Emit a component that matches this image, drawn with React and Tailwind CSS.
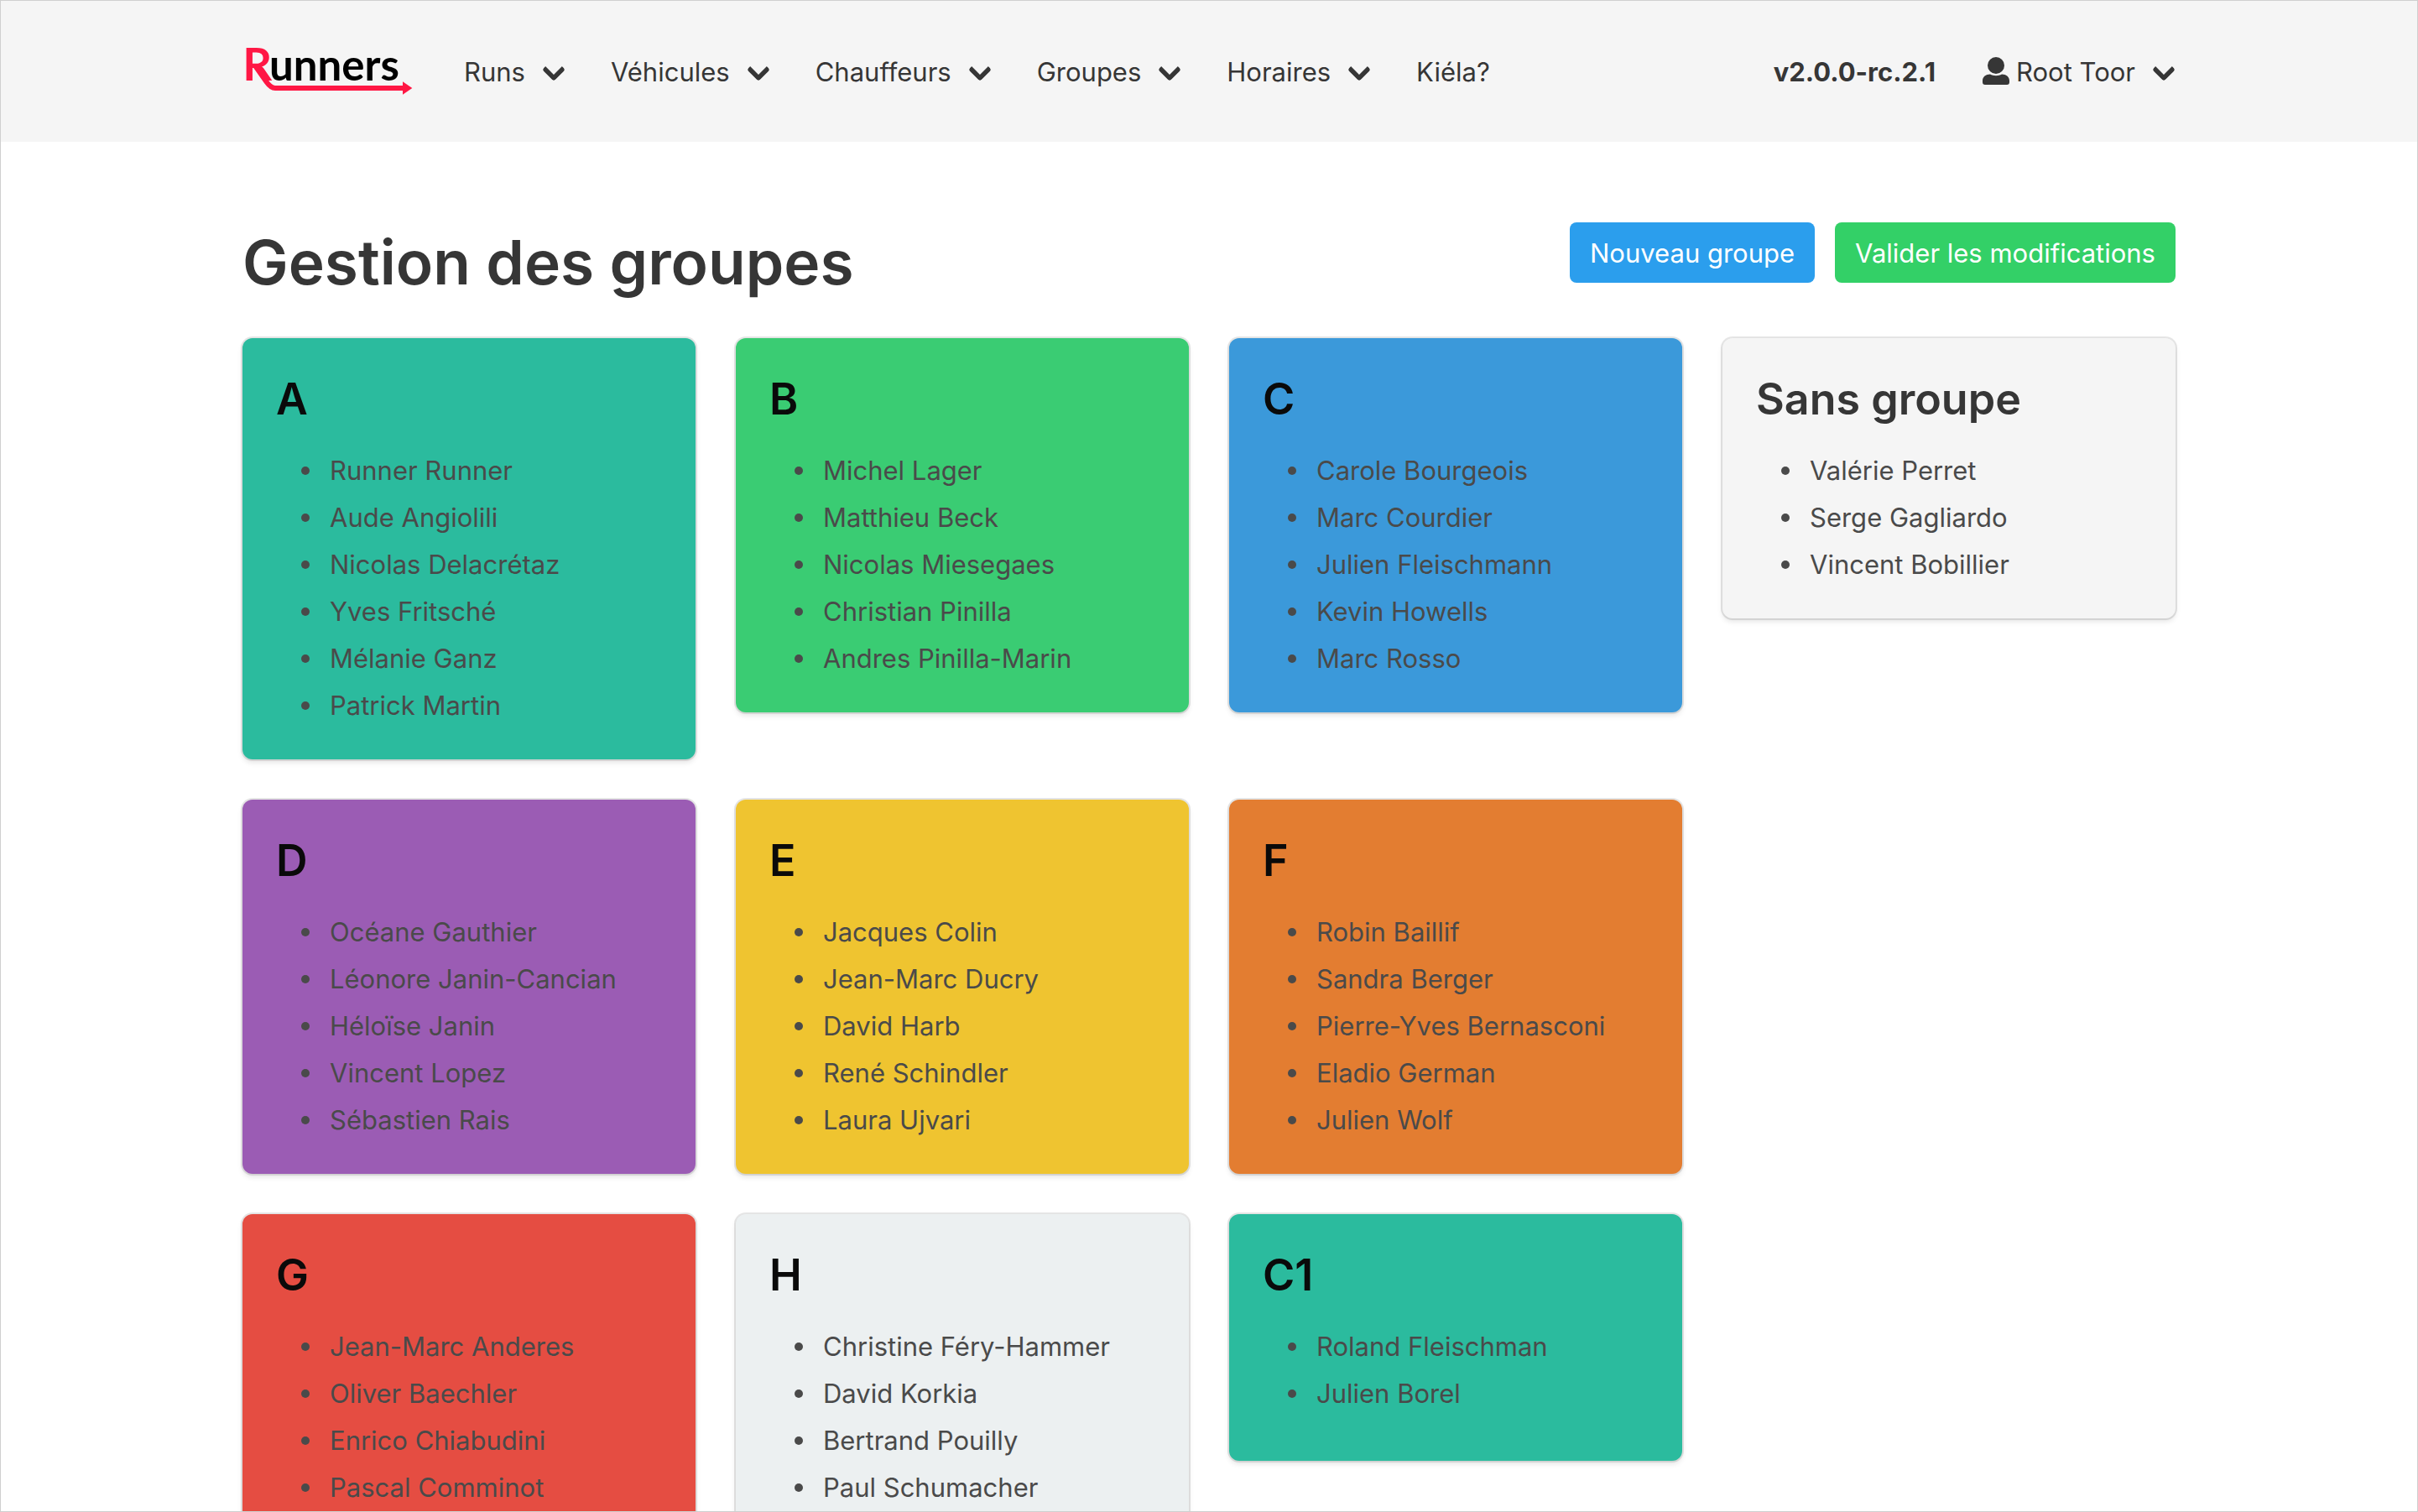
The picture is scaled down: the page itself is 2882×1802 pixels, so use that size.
import React from "react";

const NAV = [
  { label: "Runs", menu: true },
  { label: "Véhicules", menu: true },
  { label: "Chauffeurs", menu: true },
  { label: "Groupes", menu: true },
  { label: "Horaires", menu: true },
  { label: "Kiéla?", menu: false },
];

const GROUPS = [
  { name: "A", color: "bg-[#2bbb9e]", people: ["Runner Runner", "Aude Angiolili", "Nicolas Delacrétaz", "Yves Fritsché", "Mélanie Ganz", "Patrick Martin"] },
  { name: "B", color: "bg-[#3acc73]", people: ["Michel Lager", "Matthieu Beck", "Nicolas Miesegaes", "Christian Pinilla", "Andres Pinilla-Marin"] },
  { name: "C", color: "bg-[#3b99da]", people: ["Carole Bourgeois", "Marc Courdier", "Julien Fleischmann", "Kevin Howells", "Marc Rosso"] },
  { name: "D", color: "bg-[#9b5cb4]", people: ["Océane Gauthier", "Léonore Janin-Cancian", "Héloïse Janin", "Vincent Lopez", "Sébastien Rais"] },
  { name: "E", color: "bg-[#efc430]", people: ["Jacques Colin", "Jean-Marc Ducry", "David Harb", "René Schindler", "Laura Ujvari"] },
  { name: "F", color: "bg-[#e37d31]", people: ["Robin Baillif", "Sandra Berger", "Pierre-Yves Bernasconi", "Eladio German", "Julien Wolf"] },
  { name: "G", color: "bg-[#e54d42]", people: ["Jean-Marc Anderes", "Oliver Baechler", "Enrico Chiabudini", "Pascal Comminot"] },
  { name: "H", color: "bg-[#ecf0f1]", people: ["Christine Féry-Hammer", "David Korkia", "Bertrand Pouilly", "Paul Schumacher"] },
  { name: "C1", color: "bg-[#2bbb9e]", people: ["Roland Fleischman", "Julien Borel"] },
];

function Logo() {
  return (
    <svg viewBox="57 18 672 300" className="h-[100px] w-56" role="img" aria-label="Runners">
      <text x="58" y="199" fontFamily="Lato" fontWeight="700" fontSize="163" fill="#ff1744">R</text>
      <text x="153" y="199" fontFamily="Lato" fontWeight="700" fontSize="153" fill="#000">unners</text>
      <path d="M103 146 L142 202 Q158 225 174 225 H634" fill="none" stroke="#ff1744" strokeWidth="18" />
      <path d="M630 202 L664 225 L630 248 Z" fill="#ff1744" />
    </svg>
  );
}

function Arrow() {
  return <span aria-hidden="true" className="-mt-1.5 size-5 -rotate-45 rounded-sm border-b-6 border-l-6 border-[#363636]" />;
}

function UserIcon() {
  return (
    <svg viewBox="0 0 32 34" className="-mt-1 h-[34px] w-8" fill="#363636" aria-hidden="true">
      <circle cx="16" cy="11" r="10" />
      <path d="M9 21.5 C13 23.8 19 23.8 23 21.5 C28 21.5 32 24.500 32 29 V31 Q32 34 29 34 H3 Q0 34 0 31 V29 C0 24.500 4 21.500 9 21.500 Z" />
    </svg>
  );
}

function Card({ name, people, color, title }) {
  return (
    <section className={`min-h-[294px] rounded-xl px-10 pt-[42px] pb-10 shadow-[0_4px_6px_rgba(10,10,10,0.1),0_0_0_2px_rgba(10,10,10,0.1)] ${color}`}>
      <h2 className={`mb-[30px] text-[52px] leading-[62px] font-semibold ${title}`}>{name}</h2>
      <ul className="ml-[30px] space-y-2 text-[31px] leading-12 text-[#4a4a4a]">
        {people.map((p) => (
          <li key={p} className="flex items-center gap-6 before:size-2.5 before:shrink-0 before:rounded-full before:bg-current before:content-['']">
            {p}
          </li>
        ))}
      </ul>
    </section>
  );
}

export default function App() {
  return (
    <div className="h-screen overflow-hidden border border-[#cfcfcf] bg-white font-['Inter',sans-serif] text-[31px] leading-12 text-[#363636]">
      <header className="bg-[#f5f5f5] py-8">
        <div className="mx-auto flex h-[104px] max-w-[2304px] items-center justify-between pt-0.5">
          <nav className="flex items-center" aria-label="Navigation principale">
            <a href="#" className="mr-10">
              <Logo />
            </a>
            <div className="flex items-center gap-[58px]">
              {NAV.map((n) =>
                n.menu ? (
                  <button key={n.label} type="button" className="flex items-center gap-6">
                    {n.label}
                    <Arrow />
                  </button>
                ) : (
                  <a key={n.label} href="#">{n.label}</a>
                )
              )}
            </div>
          </nav>
          <div className="flex items-center gap-14">
            <strong className="font-bold">v2.0.0-rc.2.1</strong>
            <button type="button" className="mr-1 flex items-center gap-6">
              <span className="flex items-center gap-2">
                <UserIcon />
                Root Toor
              </span>
              <Arrow />
            </button>
          </div>
        </div>
      </header>

      <main className="mx-auto max-w-[2304px] pt-24">
        <div className="mb-[42px] flex items-start justify-between">
          <h1 className="text-[73px] leading-24 font-semibold">Gestion des groupes</h1>
          <div className="flex gap-6">
            <button type="button" className="h-18 rounded-lg bg-[#2b9eed] px-6 pt-0.5 text-white">Nouveau groupe</button>
            <button type="button" className="h-18 rounded-lg bg-[#33d067] px-6 pt-0.5 text-white">Valider les modifications</button>
          </div>
        </div>
        <div className="grid grid-cols-4 items-start gap-12">
          <div className="col-span-3 grid grid-cols-3 items-start gap-12">
            {GROUPS.map((g) => (
              <Card key={g.name} {...g} title="text-[#0a0a0a]" />
            ))}
          </div>
          <Card
            name="Sans groupe"
            color="bg-[#f5f5f5]"
            title="text-[#363636]"
            people={["Valérie Perret", "Serge Gagliardo", "Vincent Bobillier"]}
          />
        </div>
      </main>
    </div>
  );
}
